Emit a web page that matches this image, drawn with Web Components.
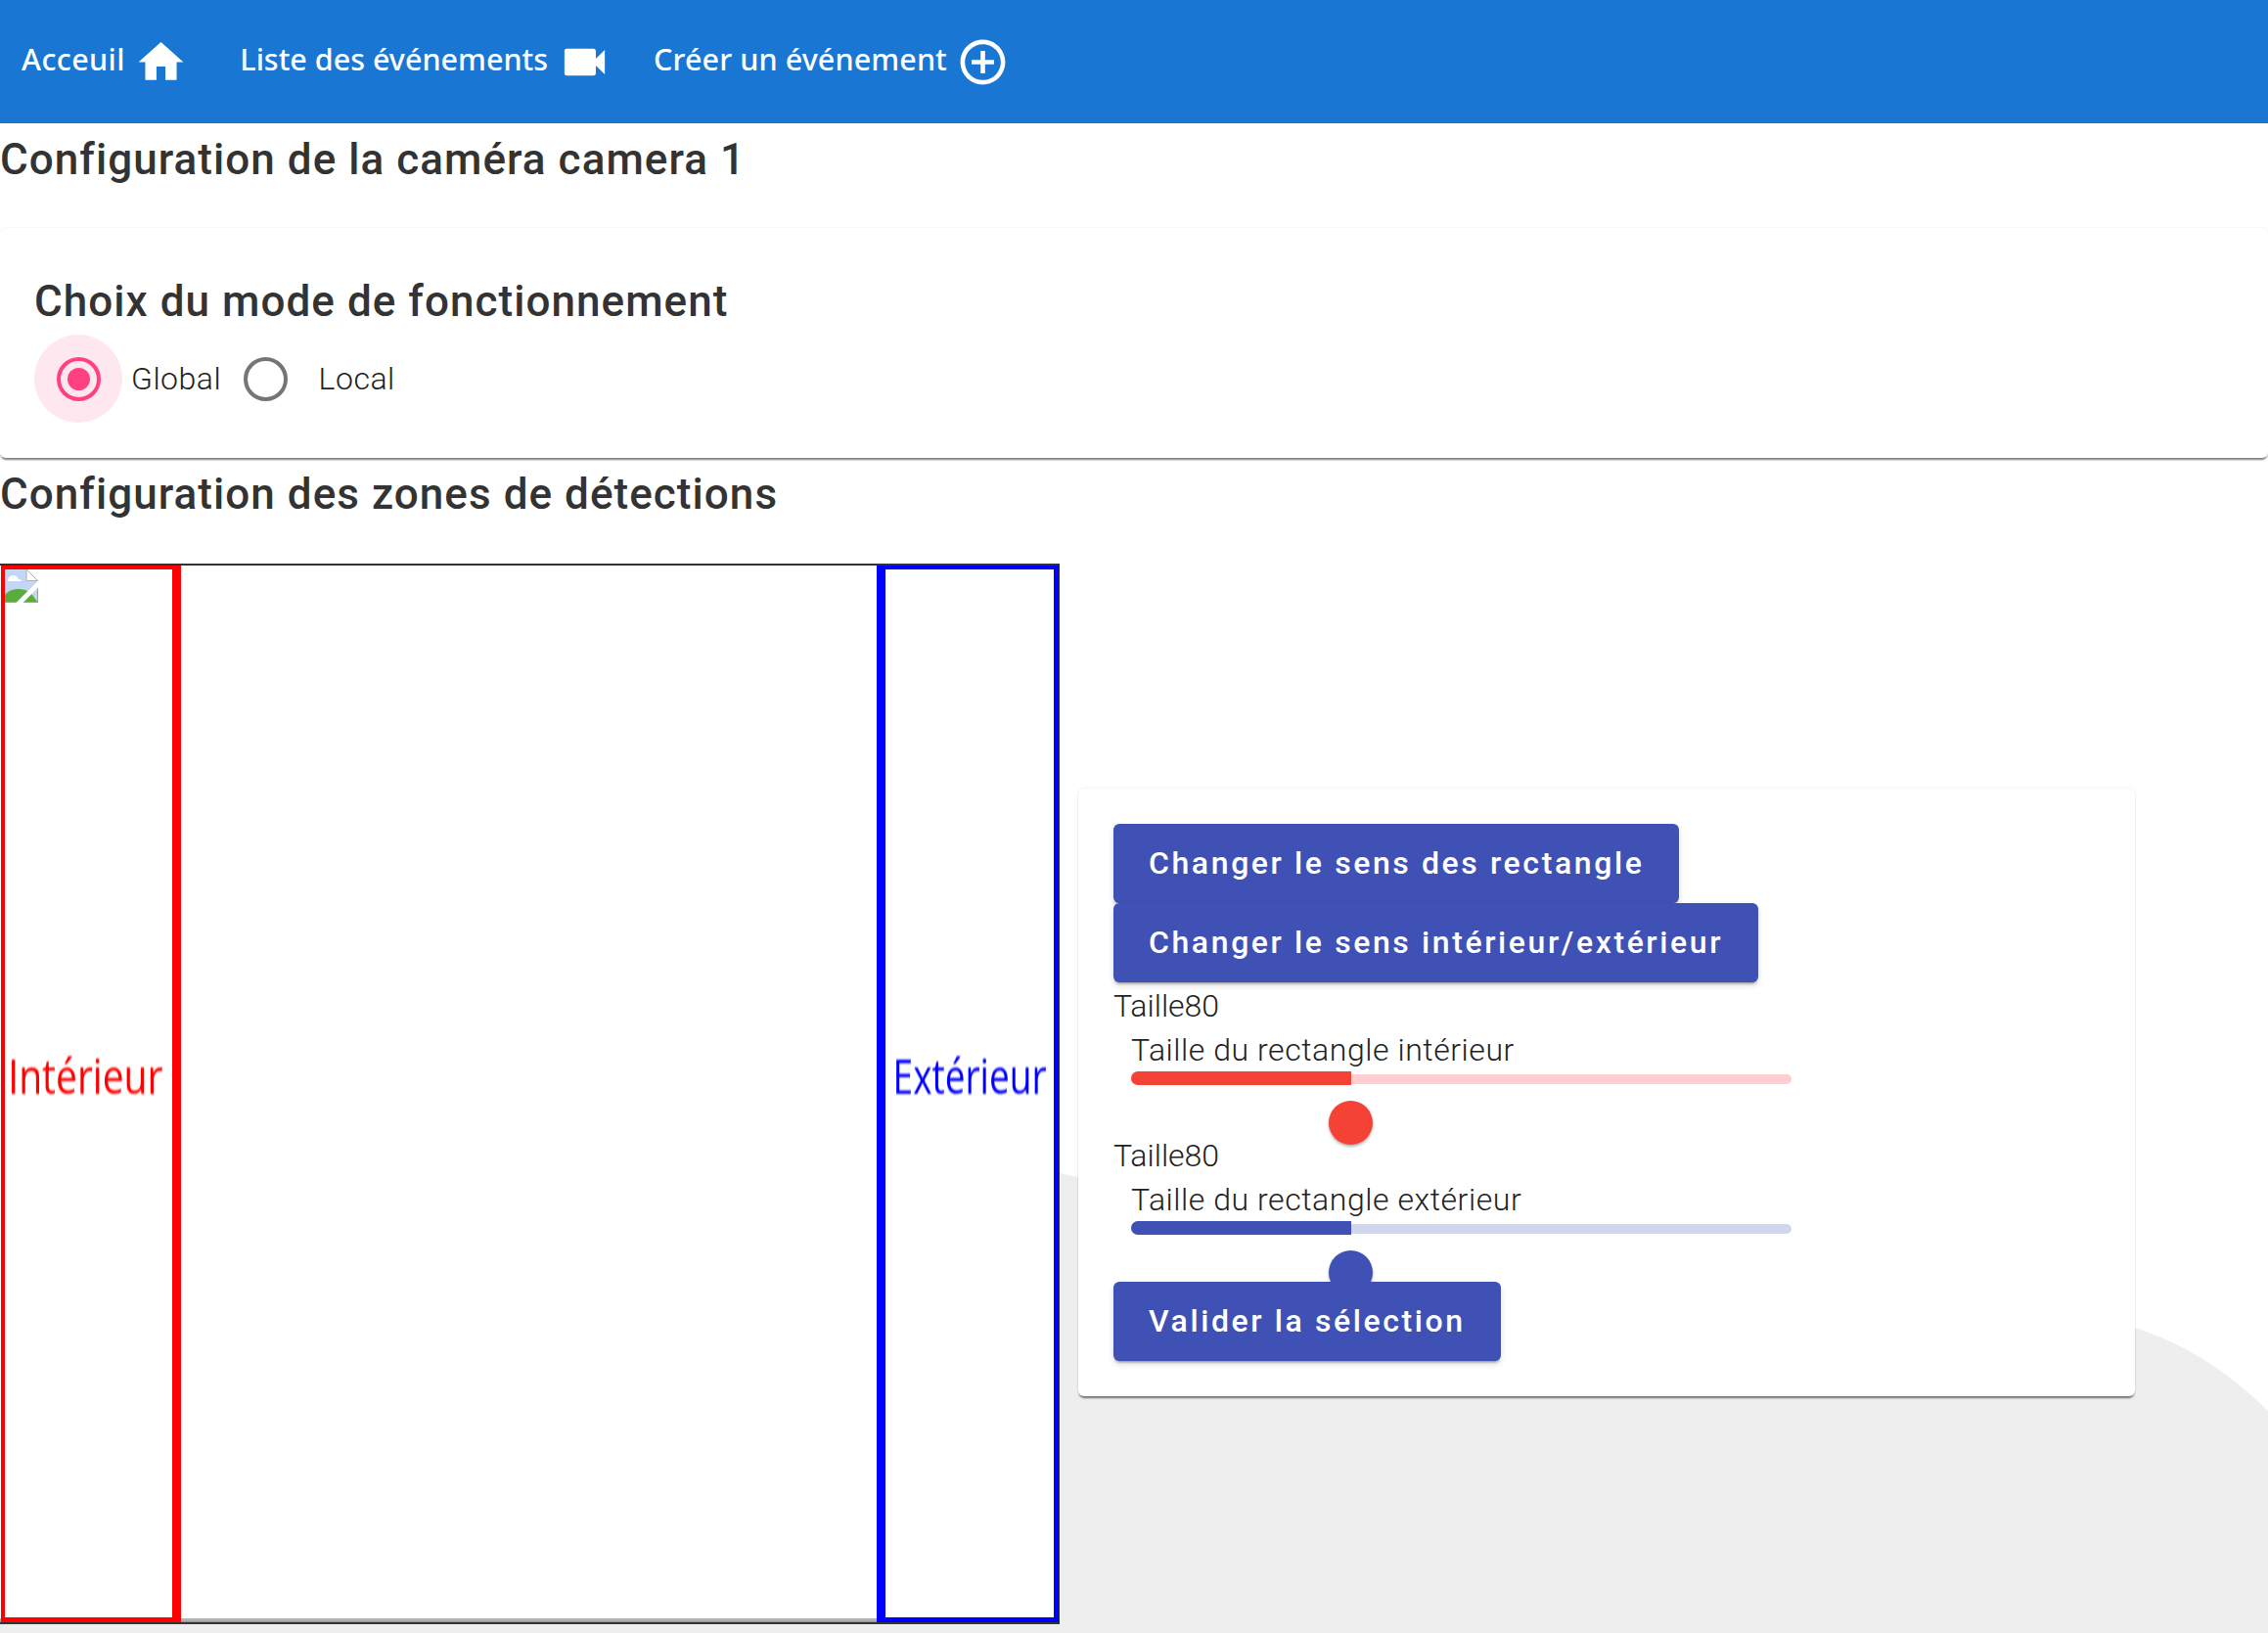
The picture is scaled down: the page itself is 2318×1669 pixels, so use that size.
<!DOCTYPE html>
<html lang="fr">
<head>
<meta charset="utf-8">
<title>Configuration</title>
<style>
  html, body { margin: 0; padding: 0; background: #fff; }
  body { width: 2318px; height: 1669px; overflow: hidden; position: relative; isolation: isolate; font-family: Roboto, sans-serif; color: #333; }
</style>
</head>
<body>
<wave-background></wave-background>
<app-nav>
  <nav-link icon="home" style="margin-left:22px;letter-spacing:.4px">Acceuil</nav-link>
  <nav-link icon="videocam" style="margin-left:53px">Liste des événements</nav-link>
  <nav-link icon="add" style="margin-left:43.5px;letter-spacing:.1px">Créer un événement</nav-link>
</app-nav>
<section-title style="height:107px">Configuration de la caméra camera 1</section-title>
<mode-card>
  <radio-option checked>Global</radio-option>
  <radio-option>Local</radio-option>
</mode-card>
<section-title style="height:108px">Configuration des zones de détections</section-title>
<zone-row>
  <zone-canvas></zone-canvas>
  <control-card>
    <action-button>Changer le sens des rectangle</action-button>
    <action-button>Changer le sens intérieur/extérieur</action-button>
    <size-slider color="#f44336" light="#ffcdd2" value="33.3">Taille du rectangle intérieur</size-slider>
    <size-slider color="#3f51b5" light="#d1d5ed" value="33.3">Taille du rectangle extérieur</size-slider>
    <action-button>Valider la sélection</action-button>
  </control-card>
</zone-row>

<script>
const ICONS = {
  home: 'M10 20v-6h4v6h5v-8h3L12 3 2 12h3v8z',
  videocam: 'M17 10.5V7c0-.55-.45-1-1-1H4c-.55 0-1 .45-1 1v10c0 .55.45 1 1 1h12c.55 0 1-.45 1-1v-3.5l4 4v-11l-4 4z',
  add: 'M13 7h-2v4H7v2h4v4h2v-4h4v-2h-4V7zm-1-5C6.48 2 2 6.48 2 12s4.48 10 10 10 10-4.48 10-10S17.52 2 12 2zm0 18c-4.41 0-8-3.59-8-8s3.59-8 8-8 8 3.59 8 8-3.59 8-8 8z'
};

// small helper, every element just sets its html once
class Base extends HTMLElement {
  constructor() {
    super();
    this.attachShadow({ mode: 'open' });
  }
  connectedCallback() {
    this.shadowRoot.innerHTML = this.template();
  }
}

class WaveBackground extends Base {
  template() {
    return `
      <style>
        :host { position: absolute; left: 0; top: 0; width: 2318px; height: 1669px; z-index: -1; }
        svg { display: block; }
      </style>
      <svg width="2318" height="1669" viewBox="0 0 2318 1669">
        <path fill="#eeeeee" d="M0 1150 L1083 1199 C1500 1290 1900 1290 2182 1357 Q2255 1380 2318 1442 L2318 1669 L0 1669 Z"/>
      </svg>`;
  }
}

class AppNav extends Base {
  template() {
    return `
      <style>
        :host { display: flex; align-items: center; height: 126px; background: #1976d2; color: #fff; }
      </style>
      <slot></slot>`;
  }
}

class NavLink extends Base {
  template() {
    return `
      <style>
        :host { display: flex; align-items: center; gap: 9.5px; font: 500 30.5px "Noto Sans", sans-serif; }
        span { margin-bottom: 7px; }
        svg { width: 55px; height: 55px; fill: #fff; display: block; }
      </style>
      <span><slot></slot></span>
      <svg viewBox="0 0 24 24"><path d="${ICONS[this.getAttribute('icon')]}"/></svg>`;
  }
}

class SectionTitle extends Base {
  template() {
    return `
      <style>
        :host { display: block; font: 500 44px/1 Roboto, sans-serif; letter-spacing: 1.05px; color: #333; padding-top: 15px; box-sizing: border-box; }
      </style>
      <slot></slot>`;
  }
}

class ModeCard extends Base {
  template() {
    return `
      <style>
        :host { display: block; height: 235px; box-sizing: border-box; padding: 36px 36px 36px 35px; background: #fff; border-radius: 6px;
          box-shadow: 0 3px 2px -1px rgba(0,0,0,.5), 0 0 3px rgba(0,0,0,.08); }
        h3 { margin: 0; height: 73px; font: 500 44px/78px Roboto, sans-serif; letter-spacing: 1.05px; color: #333; }
        .row { display: flex; }
      </style>
      <h3>Choix du mode de fonctionnement</h3>
      <div class="row"><slot></slot></div>`;
  }
}

class RadioOption extends Base {
  template() {
    const on = this.hasAttribute('checked');
    return `
      <style>
        :host { display: flex; align-items: center; font: 300 32px Roboto, sans-serif; letter-spacing: .5px; color: #222; }
        .box { width: 90px; height: 90px; border-radius: 50%; display: flex; align-items: center; justify-content: center;
          background: ${on ? '#ffe7ef' : 'transparent'}; margin-right: 9px; }
        svg { width: 45px; height: 45px; display: block; }
        .label { margin-right: .5px; }
      </style>
      <div class="box">
        <svg viewBox="0 0 45 45">
          <circle cx="22.5" cy="22.5" r="20.5" fill="none" stroke="${on ? '#ff4081' : '#757575'}" stroke-width="4"/>
          ${on ? '<circle cx="22.5" cy="22.5" r="11.5" fill="#ff4081"/>' : ''}
        </svg>
      </div>
      <span class="label"><slot></slot></span>`;
  }
}

class ZoneRow extends Base {
  template() {
    return `
      <style>
        :host { display: flex; align-items: center; gap: 19px; }
      </style>
      <slot></slot>`;
  }
}

class ZoneCanvas extends Base {
  template() {
    return `
      <style>
        :host { display: block; position: relative; width: 1083px; height: 1084px; box-sizing: border-box; flex: none;
          background: #fff; border-top: 2px solid #333; border-right: 1px solid #333; border-bottom: 2px solid #333; }
        .floor { position: absolute; left: 0; right: 0; bottom: 0; height: 4px; background: linear-gradient(#b4b4b4 50%, #8a8a8a); }
        .rect { position: absolute; top: 0; bottom: 0; box-sizing: border-box; display: flex; align-items: center; justify-content: center; padding-bottom: 38px; }
        .in { left: 1px; width: 184px; border: solid #f00; border-width: 4px 9px 5px 4px; color: #f00; }
        .out { left: 896px; width: 186px; border: solid #00f; border-width: 4px 5px 5px 9px; color: #00f; }
        .rect span { font: 400 50px "Open Sans", sans-serif; display: block; filter: blur(.9px); white-space: nowrap; }
        .in span { transform: scaleX(.78); margin-right: 6px; }
        .out span { transform: scaleX(.74); }
        svg { position: absolute; left: 5px; top: 4px; }
      </style>
      <div class="floor"></div>
      <div class="rect in"><span>Intérieur</span></div>
      <div class="rect out"><span>Extérieur</span></div>
      <svg width="34" height="34" viewBox="0 0 34 34">
        <path d="M0 0H22L33.5 11V34H0Z" fill="#c3d6f5"/>
        <path d="M3 11c0-3 3-5 6-5 2 0 4 2 5 4 2 0 3 1 3 2H3Z" fill="#fff"/>
        <path d="M0 34V26C6 18 22 18 28 26L34 34Z" fill="#5aad3c"/>
        <path d="M22 .5L33.5 11.500V33.500H0" fill="none" stroke="#a0a0a0" stroke-width="1"/>
        <path d="M22 0V11.500H33.500Z" fill="#fff" stroke="#b0b0b0" stroke-width="1"/>
        <path d="M13 36L36 13" stroke="#fff" stroke-width="5"/>
      </svg>`;
  }
}

class ControlCard extends Base {
  template() {
    return `
      <style>
        :host { display: flex; flex-direction: column; align-items: flex-start; width: 1080px; box-sizing: border-box; padding: 36px; background: #fff; margin-bottom: 3px;
          border-radius: 6px; box-shadow: 0 3px 2px -1px rgba(0,0,0,.5), 0 0 3px rgba(0,0,0,.1); }
      </style>
      <slot></slot>`;
  }
}

class ActionButton extends Base {
  template() {
    return `
      <style>
        :host { display: block; position: relative; height: 81px; padding: 0 36px; box-sizing: border-box; background: #3f51b5; color: #fff;
          border-radius: 6px; font: 500 32px/81px Roboto, sans-serif; letter-spacing: 2.6px; white-space: nowrap;
          box-shadow: 0 3px 3px -2px rgba(0,0,0,.4), 0 3px 6px rgba(0,0,0,.14); }
      </style>
      <slot></slot>`;
  }
}

class SizeSlider extends Base {
  template() {
    const color = this.getAttribute('color');
    const light = this.getAttribute('light');
    const value = this.getAttribute('value');
    return `
      <style>
        :host { display: block; width: 100%; height: 153px; font: 300 32px Roboto, sans-serif; color: #222; }
        .taille { height: 48px; line-height: 48px; }
        .wrap { margin-left: 18px; width: 675px; position: relative; }
        .label { height: 43px; line-height: 43px; letter-spacing: .55px; white-space: nowrap; }
        .track { position: relative; height: 14px; }
        .rest { position: absolute; left: 0; right: 0; top: 3px; height: 10px; border-radius: 5px; background: ${light}; }
        .fill { position: absolute; left: 0; top: 0; height: 14px; width: ${value}%; border-radius: 7px 0 0 7px; background: ${color}; }
        .thumb { position: absolute; left: ${value}%; top: 30px; width: 45px; height: 45px; margin-left: -22.500px; border-radius: 50%; background: ${color};
          box-shadow: 0 2px 3px rgba(0,0,0,.3); }
      </style>
      <div class="taille">Taille80</div>
      <div class="wrap">
        <div class="label"><slot></slot></div>
        <div class="track">
          <div class="rest"></div>
          <div class="fill"></div>
          <div class="thumb"></div>
        </div>
      </div>`;
  }
}

customElements.define('wave-background', WaveBackground);
customElements.define('app-nav', AppNav);
customElements.define('nav-link', NavLink);
customElements.define('section-title', SectionTitle);
customElements.define('mode-card', ModeCard);
customElements.define('radio-option', RadioOption);
customElements.define('zone-row', ZoneRow);
customElements.define('zone-canvas', ZoneCanvas);
customElements.define('control-card', ControlCard);
customElements.define('action-button', ActionButton);
customElements.define('size-slider', SizeSlider);
</script>
</body>
</html>
